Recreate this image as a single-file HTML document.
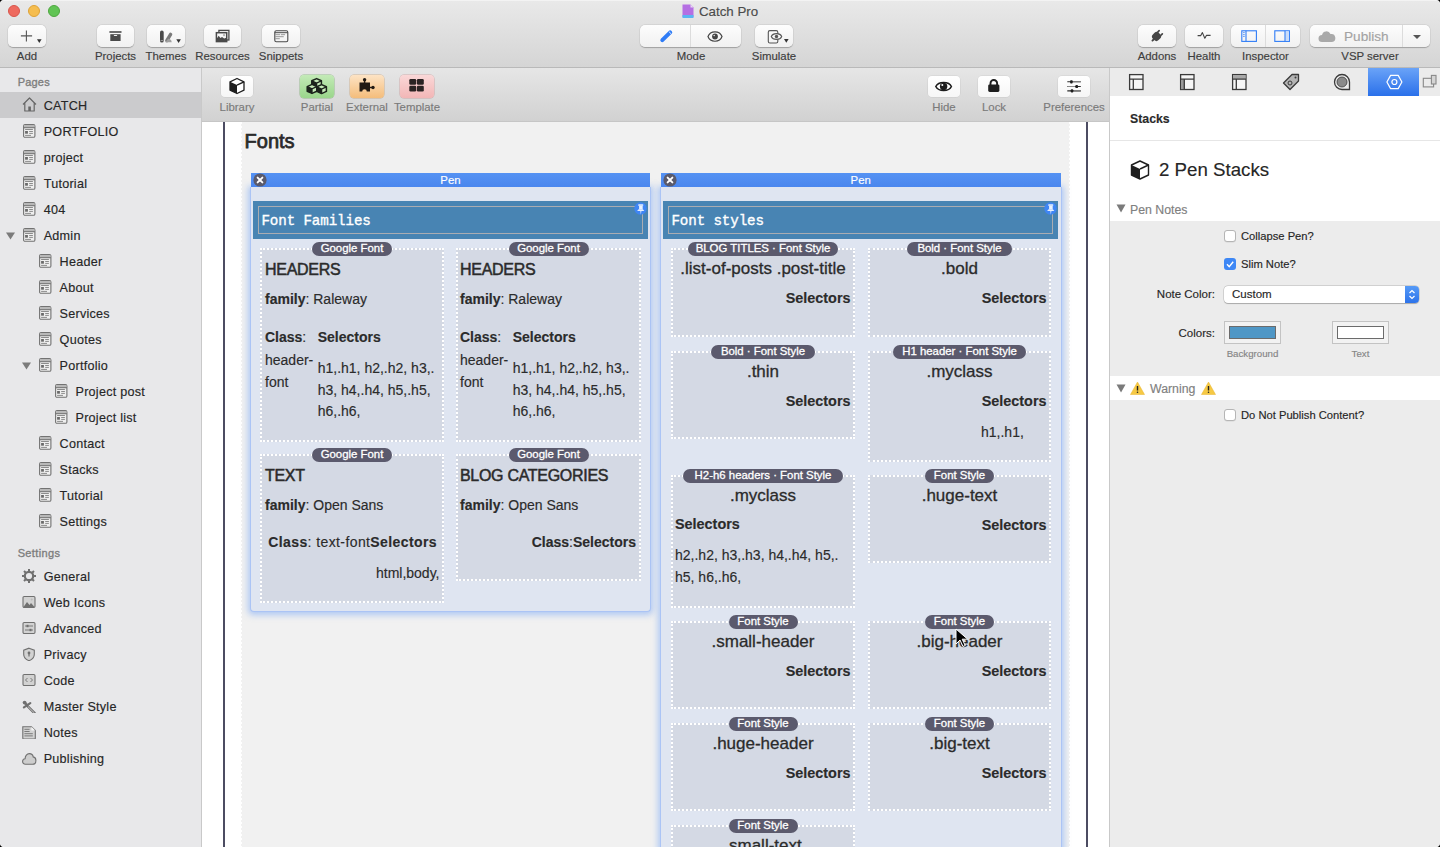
<!DOCTYPE html><html><head><meta charset="utf-8"><style>
html,body{margin:0;padding:0}
body{width:1440px;height:847px;overflow:hidden;position:relative;background:#fff;font-family:'Liberation Sans',sans-serif}
.t{position:absolute;white-space:nowrap;-webkit-text-stroke:0.15px currentColor}
.r{position:absolute;box-sizing:border-box}
</style></head><body>

<div class="r" style="left:0px;top:0px;width:1440px;height:67px;background:linear-gradient(#e9e9e9,#d5d5d5);"></div>
<div class="r" style="left:0px;top:67px;width:1440px;height:1px;background:#b9b9b9;"></div>
<div class="r" style="left:8px;top:5px;width:12px;height:12px;border-radius:50%;background:#ee6a5f;border:0.5px solid #d8554b;"></div>
<div class="r" style="left:28px;top:5px;width:12px;height:12px;border-radius:50%;background:#f5bd4f;border:0.5px solid #dea236;"></div>
<div class="r" style="left:48px;top:5px;width:12px;height:12px;border-radius:50%;background:#61c454;border:0.5px solid #4ea73f;"></div>
<svg class="r" style="left:681px;top:3px;" width="14" height="16" viewBox="0 0 14 16"><path d="M1.5 1.5h8l3 3v9.5h-11z" fill="#b56fe3"/><path d="M9.5 1.5l3 3h-3z" fill="#e8d8f5"/><rect x="1.5" y="12" width="11" height="3" fill="#5bb5f2"/></svg>
<div class="t" style="left:699.00px;top:2.89px;font-size:13.3px;line-height:17px;color:#4b4b4b;font-weight:normal;font-family:'Liberation Sans',sans-serif;">Catch Pro</div>
<div class="r" style="left:8px;top:25px;width:38px;height:22px;border-radius:5px;background:linear-gradient(#fdfdfd,#f1f1f1);box-shadow:0 0.5px 1px rgba(0,0,0,0.25),0 0 0 0.5px rgba(0,0,0,0.06);"></div>
<div class="r" style="left:97px;top:25px;width:37px;height:22px;border-radius:5px;background:linear-gradient(#fdfdfd,#f1f1f1);box-shadow:0 0.5px 1px rgba(0,0,0,0.25),0 0 0 0.5px rgba(0,0,0,0.06);"></div>
<div class="r" style="left:147px;top:25px;width:38px;height:22px;border-radius:5px;background:linear-gradient(#fdfdfd,#f1f1f1);box-shadow:0 0.5px 1px rgba(0,0,0,0.25),0 0 0 0.5px rgba(0,0,0,0.06);"></div>
<div class="r" style="left:204px;top:25px;width:37px;height:22px;border-radius:5px;background:linear-gradient(#fdfdfd,#f1f1f1);box-shadow:0 0.5px 1px rgba(0,0,0,0.25),0 0 0 0.5px rgba(0,0,0,0.06);"></div>
<div class="r" style="left:262px;top:25px;width:38px;height:22px;border-radius:5px;background:linear-gradient(#fdfdfd,#f1f1f1);box-shadow:0 0.5px 1px rgba(0,0,0,0.25),0 0 0 0.5px rgba(0,0,0,0.06);"></div>
<div class="r" style="left:640px;top:25px;width:101px;height:22px;border-radius:5px;background:linear-gradient(#fdfdfd,#f1f1f1);box-shadow:0 0.5px 1px rgba(0,0,0,0.25),0 0 0 0.5px rgba(0,0,0,0.06);"></div>
<div class="r" style="left:755px;top:25px;width:38px;height:22px;border-radius:5px;background:linear-gradient(#fdfdfd,#f1f1f1);box-shadow:0 0.5px 1px rgba(0,0,0,0.25),0 0 0 0.5px rgba(0,0,0,0.06);"></div>
<div class="r" style="left:1138px;top:25px;width:38px;height:22px;border-radius:5px;background:linear-gradient(#fdfdfd,#f1f1f1);box-shadow:0 0.5px 1px rgba(0,0,0,0.25),0 0 0 0.5px rgba(0,0,0,0.06);"></div>
<div class="r" style="left:1185px;top:25px;width:38px;height:22px;border-radius:5px;background:linear-gradient(#fdfdfd,#f1f1f1);box-shadow:0 0.5px 1px rgba(0,0,0,0.25),0 0 0 0.5px rgba(0,0,0,0.06);"></div>
<div class="r" style="left:1231px;top:25px;width:69px;height:22px;border-radius:5px;background:linear-gradient(#fdfdfd,#f1f1f1);box-shadow:0 0.5px 1px rgba(0,0,0,0.25),0 0 0 0.5px rgba(0,0,0,0.06);"></div>
<div class="r" style="left:1310px;top:25px;width:120px;height:22px;border-radius:5px;background:linear-gradient(#fdfdfd,#f1f1f1);box-shadow:0 0.5px 1px rgba(0,0,0,0.25),0 0 0 0.5px rgba(0,0,0,0.06);"></div>
<div class="r" style="left:690px;top:25px;width:1px;height:22px;background:#dcdcdc;"></div>
<div class="r" style="left:1265px;top:25px;width:1px;height:22px;background:#dcdcdc;"></div>
<div class="r" style="left:1402px;top:25px;width:1px;height:22px;background:#dcdcdc;"></div>
<div class="t" style="left:-33.00px;width:120px;text-align:center;top:48.55px;font-size:11.4px;line-height:15px;color:#3d3d3d;font-weight:normal;font-family:'Liberation Sans',sans-serif;">Add</div>
<div class="t" style="left:55.50px;width:120px;text-align:center;top:48.55px;font-size:11.4px;line-height:15px;color:#3d3d3d;font-weight:normal;font-family:'Liberation Sans',sans-serif;">Projects</div>
<div class="t" style="left:106.00px;width:120px;text-align:center;top:48.55px;font-size:11.4px;line-height:15px;color:#3d3d3d;font-weight:normal;font-family:'Liberation Sans',sans-serif;">Themes</div>
<div class="t" style="left:162.50px;width:120px;text-align:center;top:48.55px;font-size:11.4px;line-height:15px;color:#3d3d3d;font-weight:normal;font-family:'Liberation Sans',sans-serif;">Resources</div>
<div class="t" style="left:221.00px;width:120px;text-align:center;top:48.55px;font-size:11.4px;line-height:15px;color:#3d3d3d;font-weight:normal;font-family:'Liberation Sans',sans-serif;">Snippets</div>
<div class="t" style="left:631.00px;width:120px;text-align:center;top:48.55px;font-size:11.4px;line-height:15px;color:#3d3d3d;font-weight:normal;font-family:'Liberation Sans',sans-serif;">Mode</div>
<div class="t" style="left:714.00px;width:120px;text-align:center;top:48.55px;font-size:11.4px;line-height:15px;color:#3d3d3d;font-weight:normal;font-family:'Liberation Sans',sans-serif;">Simulate</div>
<div class="t" style="left:1097.00px;width:120px;text-align:center;top:48.55px;font-size:11.4px;line-height:15px;color:#3d3d3d;font-weight:normal;font-family:'Liberation Sans',sans-serif;">Addons</div>
<div class="t" style="left:1144.00px;width:120px;text-align:center;top:48.55px;font-size:11.4px;line-height:15px;color:#3d3d3d;font-weight:normal;font-family:'Liberation Sans',sans-serif;">Health</div>
<div class="t" style="left:1205.50px;width:120px;text-align:center;top:48.55px;font-size:11.4px;line-height:15px;color:#3d3d3d;font-weight:normal;font-family:'Liberation Sans',sans-serif;">Inspector</div>
<div class="t" style="left:1310.00px;width:120px;text-align:center;top:48.55px;font-size:11.4px;line-height:15px;color:#3d3d3d;font-weight:normal;font-family:'Liberation Sans',sans-serif;">VSP server</div>
<svg class="r" style="left:18px;top:29px;" width="24" height="15" viewBox="0 0 24 15"><path d="M8.4 1.6v10.8M2.9 6.9h11.2" stroke="#555" stroke-width="1.1"/><path d="M19 10.3h4.6l-2.3 3.7z" fill="#333"/></svg>
<svg class="r" style="left:106px;top:30px;" width="20" height="13" viewBox="0 0 20 13"><rect x="3.4" y="1.2" width="12.1" height="1.6" fill="#4a4a4a"/><rect x="4.3" y="4.2" width="10.3" height="6.8" fill="#4a4a4a"/><rect x="7.8" y="5.1" width="3.4" height="1" rx="0.5" fill="#eee"/></svg>
<svg class="r" style="left:156px;top:28px;" width="26" height="17" viewBox="0 0 26 17"><rect x="4" y="2.6" width="3.7" height="11.9" rx="1.85" fill="#4a4a4a"/><rect x="4.6" y="12.2" width="2.5" height="0.7" fill="#bbb"/><path d="M10.8 12.6L14.6 6.4" stroke="#7a7a7a" stroke-width="3.4" stroke-linecap="round"/><path d="M9.3 14.3h6.4c0-2.2-1.6-3.6-3.6-3.6z" fill="#a0a0a0"/><path d="M20.3 11.2h4.6l-2.3 3.8z" fill="#333"/></svg>
<svg class="r" style="left:212px;top:28px;" width="22" height="16" viewBox="0 0 22 16"><rect x="6.9" y="2.4" width="10" height="9.6" fill="none" stroke="#4a4a4a" stroke-width="1.3"/><rect x="4.4" y="4.7" width="10.3" height="8.9" fill="#f7f7f7" stroke="#4a4a4a" stroke-width="1.5"/><path d="M4.6 13.4V10.8L6.7 7.8L8.4 10L10 9L12.2 10.6L14.4 9.8V13.4Z" fill="#4a4a4a"/><circle cx="12" cy="7.2" r="1.1" fill="#b0b0b0"/></svg>
<svg class="r" style="left:270px;top:28px;" width="22" height="16" viewBox="0 0 22 16"><rect x="4.8" y="2.7" width="13" height="11" rx="1.5" fill="none" stroke="#4a4a4a" stroke-width="1.1"/><path d="M4.8 4.7h13" stroke="#4a4a4a" stroke-width="1"/><path d="M5.8 6.7h4M11.4 6.7h3.3M5.8 8.7h7.5M5.8 10.7h3.6" stroke="#777" stroke-width="0.75" stroke-linecap="round"/></svg>
<svg class="r" style="left:658px;top:28px;" width="18" height="16" viewBox="0 0 18 16"><path d="M4.3 12.2L12.2 4.3" stroke="#2f7cf6" stroke-width="4" stroke-linecap="round"/><path d="M2.9 13.6l0.6-3 2.4 2.4z" fill="#2f7cf6"/><path d="M10.9 3.6l2.1 2.1" stroke="#fff" stroke-width="0.8"/></svg>
<svg class="r" style="left:704px;top:28px;" width="22" height="16" viewBox="0 0 22 16"><path d="M4 8.5C6.2 2.2 15.8 2.2 18 8.5C15.8 14.8 6.2 14.8 4 8.5Z" fill="none" stroke="#444" stroke-width="1.2"/><circle cx="11" cy="8.5" r="2.9" fill="#444"/><circle cx="10.2" cy="7.5" r="0.8" fill="#ddd"/></svg>
<svg class="r" style="left:764px;top:28px;" width="28" height="17" viewBox="0 0 28 17"><rect x="4.3" y="2.6" width="9.5" height="12.4" rx="1.6" fill="none" stroke="#555" stroke-width="1.1"/><path d="M7.3 8.5c1.6-3.8 8.8-3.8 10.4 0c-1.6 3.8-8.8 3.8-10.4 0z" fill="#f5f5f5" stroke="#555" stroke-width="1.1"/><circle cx="12.5" cy="8.5" r="1.7" fill="#555"/><path d="M20 11h4.6l-2.3 3.7z" fill="#333"/></svg>
<svg class="r" style="left:1147px;top:27px;" width="20" height="18" viewBox="0 0 20 18"><g transform="rotate(-45 10 9)" fill="#454545"><rect x="5.2" y="5" width="8.3" height="8" rx="3"/><rect x="12.5" y="5.9" width="3.6" height="1.7" rx="0.8"/><rect x="12.5" y="10.4" width="3.6" height="1.7" rx="0.8"/><rect x="2.6" y="8.1" width="3.4" height="1.9" rx="0.9"/></g></svg>
<svg class="r" style="left:1194px;top:28px;" width="20" height="16" viewBox="0 0 20 16"><path d="M3.6 7.6h3.2l1.6-3 2.4 5.6 1.6-2.8h4.2" fill="none" stroke="#444" stroke-width="1.1" stroke-linejoin="round"/></svg>
<svg class="r" style="left:1240px;top:28px;" width="18" height="16" viewBox="0 0 18 16"><rect x="1.8" y="2.8" width="14.6" height="10.6" fill="none" stroke="#2f7cf6" stroke-width="1.1"/><path d="M6 2.8v10.6" stroke="#2f7cf6" stroke-width="1.1"/><path d="M3.1 4.6h1.6M3.1 6.6h1.6M3.1 8.4h1.6" stroke="#2f7cf6" stroke-width="0.8"/></svg>
<svg class="r" style="left:1274px;top:28px;" width="18" height="16" viewBox="0 0 18 16"><rect x="0.8" y="2.8" width="14.6" height="10.6" fill="none" stroke="#2f7cf6" stroke-width="1.1"/><rect x="11.3" y="3.3" width="3.6" height="9.6" fill="#c9dcfa"/><path d="M11 2.8v10.6" stroke="#2f7cf6" stroke-width="1.1"/></svg>
<svg class="r" style="left:1318px;top:29px;" width="18" height="15" viewBox="0 0 18 15"><path d="M4 13a3.5 3.5 0 0 1 0-7a4.5 4.5 0 0 1 8.5-1a3.5 3.5 0 0 1 1.5 8z" fill="#a9a9a9"/></svg>
<div class="t" style="left:1344.00px;top:28.29px;font-size:13.6px;line-height:18px;color:#a3a3a3;font-weight:normal;font-family:'Liberation Sans',sans-serif;">Publish</div>
<svg class="r" style="left:1408px;top:30px;" width="18" height="12" viewBox="0 0 18 12"><path d="M5 5h8l-4 4z" fill="#555"/></svg>
<div class="r" style="left:0px;top:68px;width:201px;height:779px;background:#e8e8ea;"></div>
<div class="r" style="left:201px;top:68px;width:1px;height:779px;background:#c9c9c9;"></div>
<div class="t" style="left:17.70px;top:74.79px;font-size:11px;line-height:14px;color:#7e7e7e;font-weight:normal;font-family:'Liberation Sans',sans-serif;letter-spacing:0.2px;-webkit-text-stroke:0.35px #7e7e7e;">Pages</div>
<div class="r" style="left:0px;top:92px;width:201px;height:26px;background:#cbcbcd;"></div>
<svg class="r" style="left:21px;top:96px;" width="17" height="17" viewBox="0 0 17 17"><path d="M2 8.5L8.5 2l6.5 6.5M3.8 7v8h9.4V7" fill="none" stroke="#666" stroke-width="1.2" stroke-linejoin="round"/><rect x="7.3" y="10.5" width="2.6" height="4.5" fill="#666"/></svg>
<div class="t" style="left:43.70px;top:98.13px;font-size:12.6px;line-height:16px;color:#262626;font-weight:normal;font-family:'Liberation Sans',sans-serif;letter-spacing:0.25px;">CATCH</div>
<svg class="r" style="left:23px;top:122.0px;" width="13" height="16.0" viewBox="0 0 13 16.0"><rect x="0.6" y="2.5" width="11.3" height="12.8" rx="1.4" fill="#efefef" stroke="#727272" stroke-width="1.1"/><rect x="1.1" y="3" width="10.3" height="2.6" fill="#b8b8b8"/><path d="M0.6 5.7h11.3" stroke="#727272" stroke-width="1.1"/><path d="M2.1 7.5h7.8M6.2 9.5h3.7M6.2 11.4h3.7M2.1 13.4h5.9" stroke="#7a7a7a" stroke-width="0.85"/><rect x="2.1" y="9" width="2.8" height="2.7" fill="#6a6a6a"/></svg>
<div class="t" style="left:43.70px;top:124.13px;font-size:12.6px;line-height:16px;color:#262626;font-weight:normal;font-family:'Liberation Sans',sans-serif;letter-spacing:0.25px;">PORTFOLIO</div>
<svg class="r" style="left:23px;top:148.0px;" width="13" height="16.0" viewBox="0 0 13 16.0"><rect x="0.6" y="2.5" width="11.3" height="12.8" rx="1.4" fill="#efefef" stroke="#727272" stroke-width="1.1"/><rect x="1.1" y="3" width="10.3" height="2.6" fill="#b8b8b8"/><path d="M0.6 5.7h11.3" stroke="#727272" stroke-width="1.1"/><path d="M2.1 7.5h7.8M6.2 9.5h3.7M6.2 11.4h3.7M2.1 13.4h5.9" stroke="#7a7a7a" stroke-width="0.85"/><rect x="2.1" y="9" width="2.8" height="2.7" fill="#6a6a6a"/></svg>
<div class="t" style="left:43.70px;top:150.13px;font-size:12.6px;line-height:16px;color:#262626;font-weight:normal;font-family:'Liberation Sans',sans-serif;letter-spacing:0.25px;">project</div>
<svg class="r" style="left:23px;top:174.0px;" width="13" height="16.0" viewBox="0 0 13 16.0"><rect x="0.6" y="2.5" width="11.3" height="12.8" rx="1.4" fill="#efefef" stroke="#727272" stroke-width="1.1"/><rect x="1.1" y="3" width="10.3" height="2.6" fill="#b8b8b8"/><path d="M0.6 5.7h11.3" stroke="#727272" stroke-width="1.1"/><path d="M2.1 7.5h7.8M6.2 9.5h3.7M6.2 11.4h3.7M2.1 13.4h5.9" stroke="#7a7a7a" stroke-width="0.85"/><rect x="2.1" y="9" width="2.8" height="2.7" fill="#6a6a6a"/></svg>
<div class="t" style="left:43.70px;top:176.13px;font-size:12.6px;line-height:16px;color:#262626;font-weight:normal;font-family:'Liberation Sans',sans-serif;letter-spacing:0.25px;">Tutorial</div>
<svg class="r" style="left:23px;top:200.0px;" width="13" height="16.0" viewBox="0 0 13 16.0"><rect x="0.6" y="2.5" width="11.3" height="12.8" rx="1.4" fill="#efefef" stroke="#727272" stroke-width="1.1"/><rect x="1.1" y="3" width="10.3" height="2.6" fill="#b8b8b8"/><path d="M0.6 5.7h11.3" stroke="#727272" stroke-width="1.1"/><path d="M2.1 7.5h7.8M6.2 9.5h3.7M6.2 11.4h3.7M2.1 13.4h5.9" stroke="#7a7a7a" stroke-width="0.85"/><rect x="2.1" y="9" width="2.8" height="2.7" fill="#6a6a6a"/></svg>
<div class="t" style="left:43.70px;top:202.13px;font-size:12.6px;line-height:16px;color:#262626;font-weight:normal;font-family:'Liberation Sans',sans-serif;letter-spacing:0.25px;">404</div>
<svg class="r" style="left:23px;top:226.0px;" width="13" height="16.0" viewBox="0 0 13 16.0"><rect x="0.6" y="2.5" width="11.3" height="12.8" rx="1.4" fill="#efefef" stroke="#727272" stroke-width="1.1"/><rect x="1.1" y="3" width="10.3" height="2.6" fill="#b8b8b8"/><path d="M0.6 5.7h11.3" stroke="#727272" stroke-width="1.1"/><path d="M2.1 7.5h7.8M6.2 9.5h3.7M6.2 11.4h3.7M2.1 13.4h5.9" stroke="#7a7a7a" stroke-width="0.85"/><rect x="2.1" y="9" width="2.8" height="2.7" fill="#6a6a6a"/></svg>
<svg class="r" style="left:6px;top:231.5px;" width="9" height="8.0" viewBox="0 0 9 8.0"><path d="M0 0.5h9l-4.5 7z" fill="#7b7b7b"/></svg>
<div class="t" style="left:43.70px;top:228.13px;font-size:12.6px;line-height:16px;color:#262626;font-weight:normal;font-family:'Liberation Sans',sans-serif;letter-spacing:0.25px;">Admin</div>
<svg class="r" style="left:39px;top:252.0px;" width="13" height="16.0" viewBox="0 0 13 16.0"><rect x="0.6" y="2.5" width="11.3" height="12.8" rx="1.4" fill="#efefef" stroke="#727272" stroke-width="1.1"/><rect x="1.1" y="3" width="10.3" height="2.6" fill="#b8b8b8"/><path d="M0.6 5.7h11.3" stroke="#727272" stroke-width="1.1"/><path d="M2.1 7.5h7.8M6.2 9.5h3.7M6.2 11.4h3.7M2.1 13.4h5.9" stroke="#7a7a7a" stroke-width="0.85"/><rect x="2.1" y="9" width="2.8" height="2.7" fill="#6a6a6a"/></svg>
<div class="t" style="left:59.60px;top:254.13px;font-size:12.6px;line-height:16px;color:#262626;font-weight:normal;font-family:'Liberation Sans',sans-serif;letter-spacing:0.25px;">Header</div>
<svg class="r" style="left:39px;top:278.0px;" width="13" height="16.0" viewBox="0 0 13 16.0"><rect x="0.6" y="2.5" width="11.3" height="12.8" rx="1.4" fill="#efefef" stroke="#727272" stroke-width="1.1"/><rect x="1.1" y="3" width="10.3" height="2.6" fill="#b8b8b8"/><path d="M0.6 5.7h11.3" stroke="#727272" stroke-width="1.1"/><path d="M2.1 7.5h7.8M6.2 9.5h3.7M6.2 11.4h3.7M2.1 13.4h5.9" stroke="#7a7a7a" stroke-width="0.85"/><rect x="2.1" y="9" width="2.8" height="2.7" fill="#6a6a6a"/></svg>
<div class="t" style="left:59.60px;top:280.13px;font-size:12.6px;line-height:16px;color:#262626;font-weight:normal;font-family:'Liberation Sans',sans-serif;letter-spacing:0.25px;">About</div>
<svg class="r" style="left:39px;top:304.0px;" width="13" height="16.0" viewBox="0 0 13 16.0"><rect x="0.6" y="2.5" width="11.3" height="12.8" rx="1.4" fill="#efefef" stroke="#727272" stroke-width="1.1"/><rect x="1.1" y="3" width="10.3" height="2.6" fill="#b8b8b8"/><path d="M0.6 5.7h11.3" stroke="#727272" stroke-width="1.1"/><path d="M2.1 7.5h7.8M6.2 9.5h3.7M6.2 11.4h3.7M2.1 13.4h5.9" stroke="#7a7a7a" stroke-width="0.85"/><rect x="2.1" y="9" width="2.8" height="2.7" fill="#6a6a6a"/></svg>
<div class="t" style="left:59.60px;top:306.13px;font-size:12.6px;line-height:16px;color:#262626;font-weight:normal;font-family:'Liberation Sans',sans-serif;letter-spacing:0.25px;">Services</div>
<svg class="r" style="left:39px;top:330.0px;" width="13" height="16.0" viewBox="0 0 13 16.0"><rect x="0.6" y="2.5" width="11.3" height="12.8" rx="1.4" fill="#efefef" stroke="#727272" stroke-width="1.1"/><rect x="1.1" y="3" width="10.3" height="2.6" fill="#b8b8b8"/><path d="M0.6 5.7h11.3" stroke="#727272" stroke-width="1.1"/><path d="M2.1 7.5h7.8M6.2 9.5h3.7M6.2 11.4h3.7M2.1 13.4h5.9" stroke="#7a7a7a" stroke-width="0.85"/><rect x="2.1" y="9" width="2.8" height="2.7" fill="#6a6a6a"/></svg>
<div class="t" style="left:59.60px;top:332.13px;font-size:12.6px;line-height:16px;color:#262626;font-weight:normal;font-family:'Liberation Sans',sans-serif;letter-spacing:0.25px;">Quotes</div>
<svg class="r" style="left:39px;top:356.0px;" width="13" height="16.0" viewBox="0 0 13 16.0"><rect x="0.6" y="2.5" width="11.3" height="12.8" rx="1.4" fill="#efefef" stroke="#727272" stroke-width="1.1"/><rect x="1.1" y="3" width="10.3" height="2.6" fill="#b8b8b8"/><path d="M0.6 5.7h11.3" stroke="#727272" stroke-width="1.1"/><path d="M2.1 7.5h7.8M6.2 9.5h3.7M6.2 11.4h3.7M2.1 13.4h5.9" stroke="#7a7a7a" stroke-width="0.85"/><rect x="2.1" y="9" width="2.8" height="2.7" fill="#6a6a6a"/></svg>
<svg class="r" style="left:22px;top:361.5px;" width="9" height="8.0" viewBox="0 0 9 8.0"><path d="M0 0.5h9l-4.5 7z" fill="#7b7b7b"/></svg>
<div class="t" style="left:59.60px;top:358.13px;font-size:12.6px;line-height:16px;color:#262626;font-weight:normal;font-family:'Liberation Sans',sans-serif;letter-spacing:0.25px;">Portfolio</div>
<svg class="r" style="left:55px;top:382.0px;" width="13" height="16.0" viewBox="0 0 13 16.0"><rect x="0.6" y="2.5" width="11.3" height="12.8" rx="1.4" fill="#efefef" stroke="#727272" stroke-width="1.1"/><rect x="1.1" y="3" width="10.3" height="2.6" fill="#b8b8b8"/><path d="M0.6 5.7h11.3" stroke="#727272" stroke-width="1.1"/><path d="M2.1 7.5h7.8M6.2 9.5h3.7M6.2 11.4h3.7M2.1 13.4h5.9" stroke="#7a7a7a" stroke-width="0.85"/><rect x="2.1" y="9" width="2.8" height="2.7" fill="#6a6a6a"/></svg>
<div class="t" style="left:75.50px;top:384.13px;font-size:12.6px;line-height:16px;color:#262626;font-weight:normal;font-family:'Liberation Sans',sans-serif;letter-spacing:0.25px;">Project post</div>
<svg class="r" style="left:55px;top:408.0px;" width="13" height="16.0" viewBox="0 0 13 16.0"><rect x="0.6" y="2.5" width="11.3" height="12.8" rx="1.4" fill="#efefef" stroke="#727272" stroke-width="1.1"/><rect x="1.1" y="3" width="10.3" height="2.6" fill="#b8b8b8"/><path d="M0.6 5.7h11.3" stroke="#727272" stroke-width="1.1"/><path d="M2.1 7.5h7.8M6.2 9.5h3.7M6.2 11.4h3.7M2.1 13.4h5.9" stroke="#7a7a7a" stroke-width="0.85"/><rect x="2.1" y="9" width="2.8" height="2.7" fill="#6a6a6a"/></svg>
<div class="t" style="left:75.50px;top:410.13px;font-size:12.6px;line-height:16px;color:#262626;font-weight:normal;font-family:'Liberation Sans',sans-serif;letter-spacing:0.25px;">Project list</div>
<svg class="r" style="left:39px;top:434.0px;" width="13" height="16.0" viewBox="0 0 13 16.0"><rect x="0.6" y="2.5" width="11.3" height="12.8" rx="1.4" fill="#efefef" stroke="#727272" stroke-width="1.1"/><rect x="1.1" y="3" width="10.3" height="2.6" fill="#b8b8b8"/><path d="M0.6 5.7h11.3" stroke="#727272" stroke-width="1.1"/><path d="M2.1 7.5h7.8M6.2 9.5h3.7M6.2 11.4h3.7M2.1 13.4h5.9" stroke="#7a7a7a" stroke-width="0.85"/><rect x="2.1" y="9" width="2.8" height="2.7" fill="#6a6a6a"/></svg>
<div class="t" style="left:59.60px;top:436.13px;font-size:12.6px;line-height:16px;color:#262626;font-weight:normal;font-family:'Liberation Sans',sans-serif;letter-spacing:0.25px;">Contact</div>
<svg class="r" style="left:39px;top:460.0px;" width="13" height="16.0" viewBox="0 0 13 16.0"><rect x="0.6" y="2.5" width="11.3" height="12.8" rx="1.4" fill="#efefef" stroke="#727272" stroke-width="1.1"/><rect x="1.1" y="3" width="10.3" height="2.6" fill="#b8b8b8"/><path d="M0.6 5.7h11.3" stroke="#727272" stroke-width="1.1"/><path d="M2.1 7.5h7.8M6.2 9.5h3.7M6.2 11.4h3.7M2.1 13.4h5.9" stroke="#7a7a7a" stroke-width="0.85"/><rect x="2.1" y="9" width="2.8" height="2.7" fill="#6a6a6a"/></svg>
<div class="t" style="left:59.60px;top:462.13px;font-size:12.6px;line-height:16px;color:#262626;font-weight:normal;font-family:'Liberation Sans',sans-serif;letter-spacing:0.25px;">Stacks</div>
<svg class="r" style="left:39px;top:486.0px;" width="13" height="16.0" viewBox="0 0 13 16.0"><rect x="0.6" y="2.5" width="11.3" height="12.8" rx="1.4" fill="#efefef" stroke="#727272" stroke-width="1.1"/><rect x="1.1" y="3" width="10.3" height="2.6" fill="#b8b8b8"/><path d="M0.6 5.7h11.3" stroke="#727272" stroke-width="1.1"/><path d="M2.1 7.5h7.8M6.2 9.5h3.7M6.2 11.4h3.7M2.1 13.4h5.9" stroke="#7a7a7a" stroke-width="0.85"/><rect x="2.1" y="9" width="2.8" height="2.7" fill="#6a6a6a"/></svg>
<div class="t" style="left:59.60px;top:488.13px;font-size:12.6px;line-height:16px;color:#262626;font-weight:normal;font-family:'Liberation Sans',sans-serif;letter-spacing:0.25px;">Tutorial</div>
<svg class="r" style="left:39px;top:512.0px;" width="13" height="16.0" viewBox="0 0 13 16.0"><rect x="0.6" y="2.5" width="11.3" height="12.8" rx="1.4" fill="#efefef" stroke="#727272" stroke-width="1.1"/><rect x="1.1" y="3" width="10.3" height="2.6" fill="#b8b8b8"/><path d="M0.6 5.7h11.3" stroke="#727272" stroke-width="1.1"/><path d="M2.1 7.5h7.8M6.2 9.5h3.7M6.2 11.4h3.7M2.1 13.4h5.9" stroke="#7a7a7a" stroke-width="0.85"/><rect x="2.1" y="9" width="2.8" height="2.7" fill="#6a6a6a"/></svg>
<div class="t" style="left:59.60px;top:514.13px;font-size:12.6px;line-height:16px;color:#262626;font-weight:normal;font-family:'Liberation Sans',sans-serif;letter-spacing:0.25px;">Settings</div>
<div class="t" style="left:17.70px;top:545.99px;font-size:11px;line-height:14px;color:#7e7e7e;font-weight:normal;font-family:'Liberation Sans',sans-serif;letter-spacing:0.35px;-webkit-text-stroke:0.35px #7e7e7e;">Settings</div>
<svg class="r" style="left:22px;top:568.9px;" width="15" height="14.0" viewBox="0 0 15 14.0"><g transform="translate(7,7)"><circle r="4.2" fill="none" stroke="#707070" stroke-width="2.2"/><g stroke="#707070" stroke-width="2"><path d="M0-7v2.5M0 4.5V7M-7 0h2.5M4.5 0H7M-5 -5l1.8 1.8M3.2 3.2L5 5M-5 5l1.8-1.8M3.2-3.2L5-5"/></g></g></svg>
<div class="t" style="left:43.70px;top:568.53px;font-size:12.6px;line-height:16px;color:#262626;font-weight:normal;font-family:'Liberation Sans',sans-serif;letter-spacing:0.25px;">General</div>
<svg class="r" style="left:22px;top:594.9px;" width="15" height="14.0" viewBox="0 0 15 14.0"><rect x="1" y="1.5" width="12" height="11" rx="1.2" fill="#d2d2d2" stroke="#707070" stroke-width="1.1"/><path d="M1.5 12l3.5-5 2.5 3 1.5-2 3.5 4z" fill="#707070"/><circle cx="9.7" cy="4.5" r="1" fill="#bbb"/></svg>
<div class="t" style="left:43.70px;top:594.53px;font-size:12.6px;line-height:16px;color:#262626;font-weight:normal;font-family:'Liberation Sans',sans-serif;letter-spacing:0.25px;">Web Icons</div>
<svg class="r" style="left:22px;top:620.9px;" width="15" height="14.0" viewBox="0 0 15 14.0"><rect x="1" y="1.5" width="12" height="11" rx="1.2" fill="#d2d2d2" stroke="#707070" stroke-width="1.1"/><path d="M3 5h8M3 9h8" stroke="#707070" stroke-width="0.9"/><rect x="4.5" y="3.8" width="2" height="2.4" fill="#707070"/><rect x="7.5" y="7.8" width="2" height="2.4" fill="#707070"/></svg>
<div class="t" style="left:43.70px;top:620.53px;font-size:12.6px;line-height:16px;color:#262626;font-weight:normal;font-family:'Liberation Sans',sans-serif;letter-spacing:0.25px;">Advanced</div>
<svg class="r" style="left:22px;top:646.9px;" width="15" height="14.0" viewBox="0 0 15 14.0"><path d="M7 1.2l5.3 2v4c0 3.2-2.5 5.5-5.3 6.5c-2.8-1-5.3-3.3-5.3-6.5v-4z" fill="#d2d2d2" stroke="#707070" stroke-width="1.1"/><circle cx="7" cy="6" r="1.4" fill="#707070"/><rect x="6.4" y="6.5" width="1.2" height="3" fill="#707070"/></svg>
<div class="t" style="left:43.70px;top:646.53px;font-size:12.6px;line-height:16px;color:#262626;font-weight:normal;font-family:'Liberation Sans',sans-serif;letter-spacing:0.25px;">Privacy</div>
<svg class="r" style="left:22px;top:672.9px;" width="15" height="14.0" viewBox="0 0 15 14.0"><rect x="1" y="1.5" width="12" height="11" rx="1.2" fill="#d2d2d2" stroke="#707070" stroke-width="1.1"/><path d="M5.5 5L3.5 7l2 2M8.5 5l2 2-2 2" fill="none" stroke="#707070" stroke-width="0.9"/></svg>
<div class="t" style="left:43.70px;top:672.53px;font-size:12.6px;line-height:16px;color:#262626;font-weight:normal;font-family:'Liberation Sans',sans-serif;letter-spacing:0.25px;">Code</div>
<svg class="r" style="left:22px;top:698.9px;" width="15" height="14.0" viewBox="0 0 15 14.0"><path d="M5.6 7.2L12.6 14.2" stroke="#707070" stroke-width="2.6" stroke-linecap="round"/><path d="M5.9 7.5L12.3 13.9" stroke="#c8c8c8" stroke-width="1"/><circle cx="2.6" cy="3.6" r="1.9" fill="#707070"/><path d="M2.6 3.6L5.5 6.5" stroke="#707070" stroke-width="2.4"/><path d="M1.9 8.4L8.3 4.2" stroke="#707070" stroke-width="2.2" stroke-linecap="round"/></svg>
<div class="t" style="left:43.70px;top:698.53px;font-size:12.6px;line-height:16px;color:#262626;font-weight:normal;font-family:'Liberation Sans',sans-serif;letter-spacing:0.25px;">Master Style</div>
<svg class="r" style="left:22px;top:724.9px;" width="15" height="14.0" viewBox="0 0 15 14.0"><path d="M0.8 1.7h8.6l3.9 3.9v7.7a0.7 0.7 0 0 1-0.7 0.7H1.5a0.7 0.7 0 0 1-0.7-0.7z" fill="#d2d2d2" stroke="#707070" stroke-width="1.1"/><path d="M9.4 1.7v3.9h3.9z" fill="#f4f4f4"/><path d="M2.4 4.3h5.2M2.4 6.5h5.2M2.4 8.7h8.4M2.4 10.9h8.4" stroke="#707070" stroke-width="0.9"/></svg>
<div class="t" style="left:43.70px;top:724.53px;font-size:12.6px;line-height:16px;color:#262626;font-weight:normal;font-family:'Liberation Sans',sans-serif;letter-spacing:0.25px;">Notes</div>
<svg class="r" style="left:22px;top:750.9px;" width="15" height="14.0" viewBox="0 0 15 14.0"><path d="M3.5 13.3C1.6 13.3 0.6 11.9 0.6 10.5C0.6 9 1.7 7.9 3.1 7.8C3.1 5 5 2.6 7.4 2.6C9.4 2.6 10.9 4 11.2 5.9C13 6.2 13.9 7.6 13.9 9.5C13.9 11.6 12.6 13.3 10.6 13.3Z" fill="#cdcdcd" stroke="#707070" stroke-width="1.1"/></svg>
<div class="t" style="left:43.70px;top:750.53px;font-size:12.6px;line-height:16px;color:#262626;font-weight:normal;font-family:'Liberation Sans',sans-serif;letter-spacing:0.25px;">Publishing</div>
<div class="r" style="left:202px;top:68px;width:907px;height:54px;background:linear-gradient(#e6e6e6,#d1d1d1);"></div>
<div class="r" style="left:202px;top:121px;width:907px;height:1px;background:#c6c6c6;"></div>
<div class="r" style="left:221px;top:76px;width:32px;height:21px;border-radius:4px;background:linear-gradient(#ffffff,#f6f6f6);box-shadow:0 0 0 0.5px rgba(0,0,0,0.08);"></div>
<div class="r" style="left:300px;top:75px;width:34px;height:23px;border-radius:4px;background:linear-gradient(#c3eab7,#9ad68b);box-shadow:0 0 0 0.5px rgba(60,140,40,0.45);"></div>
<div class="r" style="left:350px;top:75px;width:34px;height:23px;border-radius:4px;background:linear-gradient(#fde3c4,#f4bd7b);box-shadow:0 0 0 0.5px rgba(180,110,30,0.4);"></div>
<div class="r" style="left:400px;top:75px;width:34px;height:23px;border-radius:4px;background:linear-gradient(#fad8d8,#f2b6b6);box-shadow:0 0 0 0.5px rgba(180,80,80,0.38);"></div>
<div class="r" style="left:928px;top:76px;width:32px;height:21px;border-radius:4px;background:linear-gradient(#ffffff,#f6f6f6);box-shadow:0 0 0 0.5px rgba(0,0,0,0.08);"></div>
<div class="r" style="left:978px;top:76px;width:32px;height:21px;border-radius:4px;background:linear-gradient(#ffffff,#f6f6f6);box-shadow:0 0 0 0.5px rgba(0,0,0,0.08);"></div>
<div class="r" style="left:1058px;top:76px;width:32px;height:21px;border-radius:4px;background:linear-gradient(#ffffff,#f6f6f6);box-shadow:0 0 0 0.5px rgba(0,0,0,0.08);"></div>
<div class="t" style="left:177.00px;width:120px;text-align:center;top:99.55px;font-size:11.4px;line-height:15px;color:#7a7a7a;font-weight:normal;font-family:'Liberation Sans',sans-serif;">Library</div>
<div class="t" style="left:257.00px;width:120px;text-align:center;top:99.55px;font-size:11.4px;line-height:15px;color:#7a7a7a;font-weight:normal;font-family:'Liberation Sans',sans-serif;">Partial</div>
<div class="t" style="left:307.00px;width:120px;text-align:center;top:99.55px;font-size:11.4px;line-height:15px;color:#7a7a7a;font-weight:normal;font-family:'Liberation Sans',sans-serif;">External</div>
<div class="t" style="left:357.00px;width:120px;text-align:center;top:99.55px;font-size:11.4px;line-height:15px;color:#7a7a7a;font-weight:normal;font-family:'Liberation Sans',sans-serif;">Template</div>
<div class="t" style="left:884.00px;width:120px;text-align:center;top:99.55px;font-size:11.4px;line-height:15px;color:#7a7a7a;font-weight:normal;font-family:'Liberation Sans',sans-serif;">Hide</div>
<div class="t" style="left:934.00px;width:120px;text-align:center;top:99.55px;font-size:11.4px;line-height:15px;color:#7a7a7a;font-weight:normal;font-family:'Liberation Sans',sans-serif;">Lock</div>
<div class="t" style="left:1014.00px;width:120px;text-align:center;top:99.55px;font-size:11.4px;line-height:15px;color:#7a7a7a;font-weight:normal;font-family:'Liberation Sans',sans-serif;">Preferences</div>
<svg class="r" style="left:228px;top:77px;" width="18" height="18" viewBox="0 0 18 18"><path d="M9 1.5l7 3.3v8.4L9 16.5 2 13.2V4.8z" fill="#fff" stroke="#1e1e1e" stroke-width="1.3" stroke-linejoin="round"/><path d="M2 4.8L9 8.1v8.4L2 13.2z" fill="#1e1e1e"/><path d="M9 8.1l7-3.3" stroke="#1e1e1e" stroke-width="1.3"/></svg>
<svg class="r" style="left:305px;top:76px;" width="25" height="20" viewBox="0 0 25 20"><g transform="translate(6.6,2.2)"><path d="M5 0.4L9.8 2.6V7.2L5 9.4 0.2 7.2V2.6z" fill="#c6ebb8" stroke="#1c241c" stroke-width="1.5" stroke-linejoin="round"/><path d="M0.2 2.6L5 4.8V9.4L0.2 7.2z" fill="#1c241c"/><path d="M0.2 2.6L5 4.8 9.8 2.6M5 4.8V9.4" fill="none" stroke="#1c241c" stroke-width="1.3"/></g><g transform="translate(2,8)"><path d="M5 0.4L9.8 2.6V7.2L5 9.4 0.2 7.2V2.6z" fill="#c6ebb8" stroke="#1c241c" stroke-width="1.5" stroke-linejoin="round"/><path d="M0.2 2.6L5 4.8V9.4L0.2 7.2z" fill="#1c241c"/><path d="M0.2 2.6L5 4.8 9.8 2.6M5 4.8V9.4" fill="none" stroke="#1c241c" stroke-width="1.3"/></g><g transform="translate(11.6,8.2)"><path d="M5 0.4L9.8 2.6V7.2L5 9.4 0.2 7.2V2.6z" fill="#c6ebb8" stroke="#1c241c" stroke-width="1.5" stroke-linejoin="round"/><path d="M0.2 2.6L5 4.8V9.4L0.2 7.2z" fill="#1c241c"/><path d="M0.2 2.6L5 4.8 9.8 2.6M5 4.8V9.4" fill="none" stroke="#1c241c" stroke-width="1.3"/></g></svg>
<svg class="r" style="left:355px;top:76px;" width="23" height="20" viewBox="0 0 23 20"><path d="M4.5 6.6H15V15.6H11.8A2.3 2.3 0 0 0 7.2 15.6H4.5Z" fill="#211a14"/><circle cx="9.6" cy="3.7" r="1.7" fill="#211a14"/><rect x="8.9" y="4" width="1.4" height="3" fill="#211a14"/><circle cx="18" cy="11.5" r="1.7" fill="#211a14"/><rect x="14.5" y="10.8" width="3" height="1.4" fill="#211a14"/></svg>
<svg class="r" style="left:405px;top:76px;" width="25" height="20" viewBox="0 0 25 20"><rect x="4.3" y="3" width="6.9" height="5.8" rx="1.3" fill="#2a2222"/><rect x="11.9" y="3" width="6.9" height="5.8" rx="1.3" fill="#2a2222"/><rect x="4.3" y="9.8" width="6.9" height="5.8" rx="1.3" fill="#2a2222"/><rect x="11.9" y="9.8" width="6.9" height="5.8" rx="1.3" fill="#2a2222"/></svg>
<svg class="r" style="left:932px;top:78px;" width="24" height="18" viewBox="0 0 24 18"><path d="M3.8 8.5C6.5 3.2 16.9 3.2 19.4 8.5C16.9 13.8 6.5 13.8 3.8 8.5Z" fill="#fff" stroke="#1e1e1e" stroke-width="1.6"/><circle cx="11.6" cy="8.5" r="3.7" fill="#1e1e1e"/><circle cx="10.3" cy="7.1" r="1" fill="#fff"/></svg>
<svg class="r" style="left:985px;top:77px;" width="19" height="19" viewBox="0 0 19 19"><path d="M5.5 8V6.3a3.3 3.3 0 0 1 6.6 0V8" fill="none" stroke="#1e1e1e" stroke-width="1.9"/><rect x="3.2" y="7.4" width="11.2" height="7.5" rx="1.4" fill="#1e1e1e"/></svg>
<svg class="r" style="left:1064px;top:78px;" width="22" height="18" viewBox="0 0 22 18"><path d="M3.3 3.8h13.5M3.3 8.5h13.5M3.3 12.9h13.5" stroke="#2a2a2a" stroke-width="1.1"/><path d="M9 3.8h7.8M3.3 8.5h7.8M9.5 12.9h7.3" stroke="#8a8a8a" stroke-width="1.1"/><rect x="6.1" y="2.2" width="2.6" height="3.2" rx="0.9" fill="#1e1e1e"/><rect x="11.4" y="6.9" width="2.6" height="3.2" rx="0.9" fill="#1e1e1e"/><rect x="6.7" y="11.3" width="2.6" height="3.2" rx="0.9" fill="#1e1e1e"/></svg>
<div class="r" style="left:202px;top:122px;width:907px;height:725px;background:#ffffff;"></div>
<div class="r" style="left:223px;top:122px;width:2px;height:725px;background:#4c4c62;"></div>
<div class="r" style="left:1086px;top:122px;width:2px;height:725px;background:#4c4c62;"></div>
<div class="r" style="left:241px;top:122px;width:829px;height:725px;background:#f1f1f1;"></div>
<div class="r" style="left:240px;top:122px;width:2px;height:725px;background:repeating-linear-gradient(#ffffff 0 2px,transparent 2px 4px);"></div>
<div class="r" style="left:1069px;top:122px;width:2px;height:725px;background:repeating-linear-gradient(#ffffff 0 2px,transparent 2px 4px);"></div>
<div class="t" style="left:244.60px;top:128.07px;font-size:20px;line-height:26px;color:#2a2a2a;font-weight:normal;font-family:'Liberation Sans',sans-serif;-webkit-text-stroke:0.75px #2a2a2a;">Fonts</div>
<div class="r" style="left:250px;top:187px;width:401px;height:425px;background:#dfe5f1;border:1px solid #abc4f5;border-top:none;box-shadow:0 1px 6px 1.5px rgba(110,160,245,0.5);border-radius:0 0 4px 4px;"></div>
<div class="r" style="left:251px;top:173px;width:399px;height:14px;background:linear-gradient(#5592f3,#4a86ee);"></div>
<div class="t" style="left:420.50px;width:60px;text-align:center;top:172.55px;font-size:11.4px;line-height:15px;color:#ffffff;font-weight:normal;font-family:'Liberation Sans',sans-serif;">Pen</div>
<svg class="r" style="left:253px;top:173px;" width="14" height="14" viewBox="0 0 14 14"><circle cx="7" cy="7" r="6.6" fill="#5a5a6c"/><path d="M4.6 4.6l4.8 4.8M9.4 4.6l-4.8 4.8" stroke="#fff" stroke-width="1.9" stroke-linecap="round"/></svg>
<div class="r" style="left:253px;top:201px;width:394.5px;height:38px;background:#4884b3;"></div>
<div class="r" style="left:258px;top:206px;width:384.5px;height:28px;border:1px solid #a9acb2;"></div>
<div class="t" style="left:261.40px;top:211.68px;font-size:14.2px;line-height:18px;color:#ffffff;font-weight:normal;font-family:'Liberation Mono',monospace;-webkit-text-stroke:0.35px #fff;letter-spacing:-0.1px;">Font Families</div>
<svg class="r" style="left:633.5px;top:202.0px;" width="13.0" height="13.0" viewBox="0 0 13.0 13.0"><circle cx="6.5" cy="6.5" r="6.2" fill="#3f85f3"/><rect x="4.2" y="2.2" width="5.1" height="1.6" rx="0.6" fill="#e8f0fd"/><rect x="5.1" y="3.6" width="3.6" height="3.7" fill="#e8f0fd"/><path d="M3.1 9L4.6 7.2H8.9L10.3 9Z" fill="#e8f0fd"/><path d="M6.3 9h1.1l-0.55 3.4z" fill="#e8f0fd"/></svg>
<div class="r" style="left:660px;top:187px;width:401.5px;height:713px;background:#dfe5f1;border:1px solid #abc4f5;border-top:none;box-shadow:0 1px 6px 1.5px rgba(110,160,245,0.5);border-radius:0 0 4px 4px;"></div>
<div class="r" style="left:661px;top:173px;width:399.5px;height:14px;background:linear-gradient(#5592f3,#4a86ee);"></div>
<div class="t" style="left:830.75px;width:60px;text-align:center;top:172.55px;font-size:11.4px;line-height:15px;color:#ffffff;font-weight:normal;font-family:'Liberation Sans',sans-serif;">Pen</div>
<svg class="r" style="left:663px;top:173px;" width="14" height="14" viewBox="0 0 14 14"><circle cx="7" cy="7" r="6.6" fill="#5a5a6c"/><path d="M4.6 4.6l4.8 4.8M9.4 4.6l-4.8 4.8" stroke="#fff" stroke-width="1.9" stroke-linecap="round"/></svg>
<div class="r" style="left:663px;top:201px;width:395.0px;height:38px;background:#4884b3;"></div>
<div class="r" style="left:668px;top:206px;width:385.0px;height:28px;border:1px solid #a9acb2;"></div>
<div class="t" style="left:671.40px;top:211.68px;font-size:14.2px;line-height:18px;color:#ffffff;font-weight:normal;font-family:'Liberation Mono',monospace;-webkit-text-stroke:0.35px #fff;letter-spacing:-0.1px;">Font styles</div>
<svg class="r" style="left:1044.0px;top:202.0px;" width="13.0" height="13.0" viewBox="0 0 13.0 13.0"><circle cx="6.5" cy="6.5" r="6.2" fill="#3f85f3"/><rect x="4.2" y="2.2" width="5.1" height="1.6" rx="0.6" fill="#e8f0fd"/><rect x="5.1" y="3.6" width="3.6" height="3.7" fill="#e8f0fd"/><path d="M3.1 9L4.6 7.2H8.9L10.3 9Z" fill="#e8f0fd"/><path d="M6.3 9h1.1l-0.55 3.4z" fill="#e8f0fd"/></svg>
<div class="r" style="left:260px;top:248px;width:184px;height:194px;background:#d4d9e4;border:2px dotted #ffffff;"></div>
<div class="r" style="left:312.0px;top:241.5px;width:80.0px;height:14.0px;background:#5b5a6d;border-radius:7px;"></div>
<div class="t" style="left:202.00px;width:300px;text-align:center;top:241.45px;font-size:11.4px;line-height:15px;color:#ffffff;font-weight:normal;font-family:'Liberation Sans',sans-serif;-webkit-text-stroke:0.3px #fff;">Google Font</div>
<div class="r" style="left:456px;top:248px;width:185px;height:194px;background:#d4d9e4;border:2px dotted #ffffff;"></div>
<div class="r" style="left:508.5px;top:241.5px;width:80.0px;height:14.0px;background:#5b5a6d;border-radius:7px;"></div>
<div class="t" style="left:398.50px;width:300px;text-align:center;top:241.45px;font-size:11.4px;line-height:15px;color:#ffffff;font-weight:normal;font-family:'Liberation Sans',sans-serif;-webkit-text-stroke:0.3px #fff;">Google Font</div>
<div class="r" style="left:260px;top:454px;width:184px;height:149px;background:#d4d9e4;border:2px dotted #ffffff;"></div>
<div class="r" style="left:312.0px;top:447.5px;width:80.0px;height:14.0px;background:#5b5a6d;border-radius:7px;"></div>
<div class="t" style="left:202.00px;width:300px;text-align:center;top:447.45px;font-size:11.4px;line-height:15px;color:#ffffff;font-weight:normal;font-family:'Liberation Sans',sans-serif;-webkit-text-stroke:0.3px #fff;">Google Font</div>
<div class="r" style="left:456px;top:454px;width:185px;height:127px;background:#d4d9e4;border:2px dotted #ffffff;"></div>
<div class="r" style="left:508.5px;top:447.5px;width:80.0px;height:14.0px;background:#5b5a6d;border-radius:7px;"></div>
<div class="t" style="left:398.50px;width:300px;text-align:center;top:447.45px;font-size:11.4px;line-height:15px;color:#ffffff;font-weight:normal;font-family:'Liberation Sans',sans-serif;-webkit-text-stroke:0.3px #fff;">Google Font</div>
<div class="t" style="left:265.00px;top:258.96px;font-size:16px;line-height:21px;color:#2b2b2b;font-weight:normal;font-family:'Liberation Sans',sans-serif;-webkit-text-stroke:0.5px #2b2b2b;letter-spacing:-0.3px;">HEADERS</div>
<div class="t" style="left:265.00px;top:290.15px;font-size:14px;line-height:18px;color:#2b2b2b;font-weight:normal;font-family:'Liberation Sans',sans-serif;"><b>family</b>: Raleway</div>
<div class="t" style="left:265.00px;top:327.55px;font-size:14px;line-height:18px;color:#2b2b2b;font-weight:normal;font-family:'Liberation Sans',sans-serif;"><b>Class</b>:</div>
<div class="t" style="left:317.70px;top:327.55px;font-size:14px;line-height:18px;color:#2b2b2b;font-weight:normal;font-family:'Liberation Sans',sans-serif;"><b>Selectors</b></div>
<div class="t" style="left:265.00px;top:351.15px;font-size:14px;line-height:18px;color:#2b2b2b;font-weight:normal;font-family:'Liberation Sans',sans-serif;">header-</div>
<div class="t" style="left:265.00px;top:372.65px;font-size:14px;line-height:18px;color:#2b2b2b;font-weight:normal;font-family:'Liberation Sans',sans-serif;">font</div>
<div class="t" style="left:317.70px;top:358.55px;font-size:14px;line-height:18px;color:#2b2b2b;font-weight:normal;font-family:'Liberation Sans',sans-serif;">h1,.h1, h2,.h2, h3,.</div>
<div class="t" style="left:317.70px;top:380.75px;font-size:14px;line-height:18px;color:#2b2b2b;font-weight:normal;font-family:'Liberation Sans',sans-serif;">h3, h4,.h4, h5,.h5,</div>
<div class="t" style="left:317.70px;top:401.95px;font-size:14px;line-height:18px;color:#2b2b2b;font-weight:normal;font-family:'Liberation Sans',sans-serif;">h6,.h6,</div>
<div class="t" style="left:460.00px;top:258.96px;font-size:16px;line-height:21px;color:#2b2b2b;font-weight:normal;font-family:'Liberation Sans',sans-serif;-webkit-text-stroke:0.5px #2b2b2b;letter-spacing:-0.3px;">HEADERS</div>
<div class="t" style="left:460.00px;top:290.15px;font-size:14px;line-height:18px;color:#2b2b2b;font-weight:normal;font-family:'Liberation Sans',sans-serif;"><b>family</b>: Raleway</div>
<div class="t" style="left:460.00px;top:327.55px;font-size:14px;line-height:18px;color:#2b2b2b;font-weight:normal;font-family:'Liberation Sans',sans-serif;"><b>Class</b>:</div>
<div class="t" style="left:512.70px;top:327.55px;font-size:14px;line-height:18px;color:#2b2b2b;font-weight:normal;font-family:'Liberation Sans',sans-serif;"><b>Selectors</b></div>
<div class="t" style="left:460.00px;top:351.15px;font-size:14px;line-height:18px;color:#2b2b2b;font-weight:normal;font-family:'Liberation Sans',sans-serif;">header-</div>
<div class="t" style="left:460.00px;top:372.65px;font-size:14px;line-height:18px;color:#2b2b2b;font-weight:normal;font-family:'Liberation Sans',sans-serif;">font</div>
<div class="t" style="left:512.70px;top:358.55px;font-size:14px;line-height:18px;color:#2b2b2b;font-weight:normal;font-family:'Liberation Sans',sans-serif;">h1,.h1, h2,.h2, h3,.</div>
<div class="t" style="left:512.70px;top:380.75px;font-size:14px;line-height:18px;color:#2b2b2b;font-weight:normal;font-family:'Liberation Sans',sans-serif;">h3, h4,.h4, h5,.h5,</div>
<div class="t" style="left:512.70px;top:401.95px;font-size:14px;line-height:18px;color:#2b2b2b;font-weight:normal;font-family:'Liberation Sans',sans-serif;">h6,.h6,</div>
<div class="t" style="left:265.00px;top:464.96px;font-size:16px;line-height:21px;color:#2b2b2b;font-weight:normal;font-family:'Liberation Sans',sans-serif;-webkit-text-stroke:0.5px #2b2b2b;letter-spacing:-0.3px;">TEXT</div>
<div class="t" style="left:265.00px;top:496.15px;font-size:14px;line-height:18px;color:#2b2b2b;font-weight:normal;font-family:'Liberation Sans',sans-serif;"><b>family</b>: Open Sans</div>
<div class="t" style="left:237.00px;width:200px;text-align:right;top:533.15px;font-size:14px;line-height:18px;color:#2b2b2b;font-weight:normal;font-family:'Liberation Sans',sans-serif;letter-spacing:0.4px;"><b>Class</b>: text-font<b>Selectors</b></div>
<div class="t" style="left:239.50px;width:200px;text-align:right;top:564.15px;font-size:14px;line-height:18px;color:#2b2b2b;font-weight:normal;font-family:'Liberation Sans',sans-serif;">html,body,</div>
<div class="t" style="left:460.00px;top:464.96px;font-size:16px;line-height:21px;color:#2b2b2b;font-weight:normal;font-family:'Liberation Sans',sans-serif;-webkit-text-stroke:0.5px #2b2b2b;letter-spacing:-0.3px;">BLOG CATEGORIES</div>
<div class="t" style="left:460.00px;top:496.15px;font-size:14px;line-height:18px;color:#2b2b2b;font-weight:normal;font-family:'Liberation Sans',sans-serif;"><b>family</b>: Open Sans</div>
<div class="t" style="left:436.00px;width:200px;text-align:right;top:533.15px;font-size:14px;line-height:18px;color:#2b2b2b;font-weight:normal;font-family:'Liberation Sans',sans-serif;"><b>Class</b>:<b>Selectors</b></div>
<div class="r" style="left:671px;top:248px;width:184px;height:89px;background:#d4d9e4;border:2px dotted #ffffff;"></div>
<div class="r" style="left:687.6px;top:241.5px;width:150.79999999999995px;height:14.0px;background:#5b5a6d;border-radius:7px;"></div>
<div class="t" style="left:613.00px;width:300px;text-align:center;top:241.45px;font-size:11.4px;line-height:15px;color:#ffffff;font-weight:normal;font-family:'Liberation Sans',sans-serif;-webkit-text-stroke:0.3px #fff;">BLOG TITLES · Font Style</div>
<div class="t" style="left:633.00px;width:260px;text-align:center;top:258.41px;font-size:17px;line-height:22px;color:#2b2b2b;font-weight:normal;font-family:'Liberation Sans',sans-serif;-webkit-text-stroke:0.3px #2b2b2b;">.list-of-posts .post-title</div>
<div class="t" style="left:650.50px;width:200px;text-align:right;top:289.11px;font-size:14.4px;line-height:19px;color:#2b2b2b;font-weight:normal;font-family:'Liberation Sans',sans-serif;"><b>Selectors</b></div>
<div class="r" style="left:868px;top:248px;width:183px;height:89px;background:#d4d9e4;border:2px dotted #ffffff;"></div>
<div class="r" style="left:907.4px;top:241.5px;width:104.20000000000005px;height:14.0px;background:#5b5a6d;border-radius:7px;"></div>
<div class="t" style="left:809.50px;width:300px;text-align:center;top:241.45px;font-size:11.4px;line-height:15px;color:#ffffff;font-weight:normal;font-family:'Liberation Sans',sans-serif;-webkit-text-stroke:0.3px #fff;">Bold · Font Style</div>
<div class="t" style="left:829.50px;width:260px;text-align:center;top:258.41px;font-size:17px;line-height:22px;color:#2b2b2b;font-weight:normal;font-family:'Liberation Sans',sans-serif;-webkit-text-stroke:0.3px #2b2b2b;">.bold</div>
<div class="t" style="left:846.50px;width:200px;text-align:right;top:289.11px;font-size:14.4px;line-height:19px;color:#2b2b2b;font-weight:normal;font-family:'Liberation Sans',sans-serif;"><b>Selectors</b></div>
<div class="r" style="left:671px;top:351px;width:184px;height:88px;background:#d4d9e4;border:2px dotted #ffffff;"></div>
<div class="r" style="left:710.9px;top:344.5px;width:104.20000000000005px;height:14.0px;background:#5b5a6d;border-radius:7px;"></div>
<div class="t" style="left:613.00px;width:300px;text-align:center;top:344.45px;font-size:11.4px;line-height:15px;color:#ffffff;font-weight:normal;font-family:'Liberation Sans',sans-serif;-webkit-text-stroke:0.3px #fff;">Bold · Font Style</div>
<div class="t" style="left:633.00px;width:260px;text-align:center;top:361.41px;font-size:17px;line-height:22px;color:#2b2b2b;font-weight:normal;font-family:'Liberation Sans',sans-serif;-webkit-text-stroke:0.3px #2b2b2b;">.thin</div>
<div class="t" style="left:650.50px;width:200px;text-align:right;top:392.11px;font-size:14.4px;line-height:19px;color:#2b2b2b;font-weight:normal;font-family:'Liberation Sans',sans-serif;"><b>Selectors</b></div>
<div class="r" style="left:868px;top:351px;width:183px;height:111px;background:#d4d9e4;border:2px dotted #ffffff;"></div>
<div class="r" style="left:892.8px;top:344.5px;width:133.4000000000001px;height:14.0px;background:#5b5a6d;border-radius:7px;"></div>
<div class="t" style="left:809.50px;width:300px;text-align:center;top:344.45px;font-size:11.4px;line-height:15px;color:#ffffff;font-weight:normal;font-family:'Liberation Sans',sans-serif;-webkit-text-stroke:0.3px #fff;">H1 header · Font Style</div>
<div class="t" style="left:829.50px;width:260px;text-align:center;top:361.41px;font-size:17px;line-height:22px;color:#2b2b2b;font-weight:normal;font-family:'Liberation Sans',sans-serif;-webkit-text-stroke:0.3px #2b2b2b;">.myclass</div>
<div class="t" style="left:846.50px;width:200px;text-align:right;top:392.11px;font-size:14.4px;line-height:19px;color:#2b2b2b;font-weight:normal;font-family:'Liberation Sans',sans-serif;"><b>Selectors</b></div>
<div class="t" style="left:981.00px;top:423.15px;font-size:14px;line-height:18px;color:#2b2b2b;font-weight:normal;font-family:'Liberation Sans',sans-serif;">h1,.h1,</div>
<div class="r" style="left:671px;top:475px;width:184px;height:133px;background:#d4d9e4;border:2px dotted #ffffff;"></div>
<div class="r" style="left:683.4px;top:468.5px;width:159.20000000000005px;height:14.0px;background:#5b5a6d;border-radius:7px;"></div>
<div class="t" style="left:613.00px;width:300px;text-align:center;top:468.45px;font-size:11.4px;line-height:15px;color:#ffffff;font-weight:normal;font-family:'Liberation Sans',sans-serif;-webkit-text-stroke:0.3px #fff;">H2-h6 headers · Font Style</div>
<div class="t" style="left:633.00px;width:260px;text-align:center;top:485.41px;font-size:17px;line-height:22px;color:#2b2b2b;font-weight:normal;font-family:'Liberation Sans',sans-serif;-webkit-text-stroke:0.3px #2b2b2b;">.myclass</div>
<div class="t" style="left:675.00px;top:515.11px;font-size:14.4px;line-height:19px;color:#2b2b2b;font-weight:normal;font-family:'Liberation Sans',sans-serif;"><b>Selectors</b></div>
<div class="t" style="left:675.00px;top:546.15px;font-size:14px;line-height:18px;color:#2b2b2b;font-weight:normal;font-family:'Liberation Sans',sans-serif;">h2,.h2, h3,.h3, h4,.h4, h5,.</div>
<div class="t" style="left:675.00px;top:568.45px;font-size:14px;line-height:18px;color:#2b2b2b;font-weight:normal;font-family:'Liberation Sans',sans-serif;">h5, h6,.h6,</div>
<div class="r" style="left:868px;top:475px;width:183px;height:88px;background:#d4d9e4;border:2px dotted #ffffff;"></div>
<div class="r" style="left:925.0px;top:468.5px;width:69.0px;height:14.0px;background:#5b5a6d;border-radius:7px;"></div>
<div class="t" style="left:809.50px;width:300px;text-align:center;top:468.45px;font-size:11.4px;line-height:15px;color:#ffffff;font-weight:normal;font-family:'Liberation Sans',sans-serif;-webkit-text-stroke:0.3px #fff;">Font Style</div>
<div class="t" style="left:829.50px;width:260px;text-align:center;top:485.41px;font-size:17px;line-height:22px;color:#2b2b2b;font-weight:normal;font-family:'Liberation Sans',sans-serif;-webkit-text-stroke:0.3px #2b2b2b;">.huge-text</div>
<div class="t" style="left:846.50px;width:200px;text-align:right;top:516.11px;font-size:14.4px;line-height:19px;color:#2b2b2b;font-weight:normal;font-family:'Liberation Sans',sans-serif;"><b>Selectors</b></div>
<div class="r" style="left:671px;top:621px;width:184px;height:88px;background:#d4d9e4;border:2px dotted #ffffff;"></div>
<div class="r" style="left:728.5px;top:614.5px;width:69.0px;height:14.0px;background:#5b5a6d;border-radius:7px;"></div>
<div class="t" style="left:613.00px;width:300px;text-align:center;top:614.45px;font-size:11.4px;line-height:15px;color:#ffffff;font-weight:normal;font-family:'Liberation Sans',sans-serif;-webkit-text-stroke:0.3px #fff;">Font Style</div>
<div class="t" style="left:633.00px;width:260px;text-align:center;top:631.41px;font-size:17px;line-height:22px;color:#2b2b2b;font-weight:normal;font-family:'Liberation Sans',sans-serif;-webkit-text-stroke:0.3px #2b2b2b;">.small-header</div>
<div class="t" style="left:650.50px;width:200px;text-align:right;top:662.11px;font-size:14.4px;line-height:19px;color:#2b2b2b;font-weight:normal;font-family:'Liberation Sans',sans-serif;"><b>Selectors</b></div>
<div class="r" style="left:868px;top:621px;width:183px;height:88px;background:#d4d9e4;border:2px dotted #ffffff;"></div>
<div class="r" style="left:925.0px;top:614.5px;width:69.0px;height:14.0px;background:#5b5a6d;border-radius:7px;"></div>
<div class="t" style="left:809.50px;width:300px;text-align:center;top:614.45px;font-size:11.4px;line-height:15px;color:#ffffff;font-weight:normal;font-family:'Liberation Sans',sans-serif;-webkit-text-stroke:0.3px #fff;">Font Style</div>
<div class="t" style="left:829.50px;width:260px;text-align:center;top:631.41px;font-size:17px;line-height:22px;color:#2b2b2b;font-weight:normal;font-family:'Liberation Sans',sans-serif;-webkit-text-stroke:0.3px #2b2b2b;">.big-header</div>
<div class="t" style="left:846.50px;width:200px;text-align:right;top:662.11px;font-size:14.4px;line-height:19px;color:#2b2b2b;font-weight:normal;font-family:'Liberation Sans',sans-serif;"><b>Selectors</b></div>
<div class="r" style="left:671px;top:723px;width:184px;height:88px;background:#d4d9e4;border:2px dotted #ffffff;"></div>
<div class="r" style="left:728.5px;top:716.5px;width:69.0px;height:14.0px;background:#5b5a6d;border-radius:7px;"></div>
<div class="t" style="left:613.00px;width:300px;text-align:center;top:716.45px;font-size:11.4px;line-height:15px;color:#ffffff;font-weight:normal;font-family:'Liberation Sans',sans-serif;-webkit-text-stroke:0.3px #fff;">Font Style</div>
<div class="t" style="left:633.00px;width:260px;text-align:center;top:733.41px;font-size:17px;line-height:22px;color:#2b2b2b;font-weight:normal;font-family:'Liberation Sans',sans-serif;-webkit-text-stroke:0.3px #2b2b2b;">.huge-header</div>
<div class="t" style="left:650.50px;width:200px;text-align:right;top:764.11px;font-size:14.4px;line-height:19px;color:#2b2b2b;font-weight:normal;font-family:'Liberation Sans',sans-serif;"><b>Selectors</b></div>
<div class="r" style="left:868px;top:723px;width:183px;height:88px;background:#d4d9e4;border:2px dotted #ffffff;"></div>
<div class="r" style="left:925.0px;top:716.5px;width:69.0px;height:14.0px;background:#5b5a6d;border-radius:7px;"></div>
<div class="t" style="left:809.50px;width:300px;text-align:center;top:716.45px;font-size:11.4px;line-height:15px;color:#ffffff;font-weight:normal;font-family:'Liberation Sans',sans-serif;-webkit-text-stroke:0.3px #fff;">Font Style</div>
<div class="t" style="left:829.50px;width:260px;text-align:center;top:733.41px;font-size:17px;line-height:22px;color:#2b2b2b;font-weight:normal;font-family:'Liberation Sans',sans-serif;-webkit-text-stroke:0.3px #2b2b2b;">.big-text</div>
<div class="t" style="left:846.50px;width:200px;text-align:right;top:764.11px;font-size:14.4px;line-height:19px;color:#2b2b2b;font-weight:normal;font-family:'Liberation Sans',sans-serif;"><b>Selectors</b></div>
<div class="r" style="left:671px;top:825px;width:184px;height:88px;background:#d4d9e4;border:2px dotted #ffffff;"></div>
<div class="r" style="left:728.5px;top:818.5px;width:69.0px;height:14.0px;background:#5b5a6d;border-radius:7px;"></div>
<div class="t" style="left:613.00px;width:300px;text-align:center;top:818.45px;font-size:11.4px;line-height:15px;color:#ffffff;font-weight:normal;font-family:'Liberation Sans',sans-serif;-webkit-text-stroke:0.3px #fff;">Font Style</div>
<div class="t" style="left:633.00px;width:260px;text-align:center;top:835.41px;font-size:17px;line-height:22px;color:#2b2b2b;font-weight:normal;font-family:'Liberation Sans',sans-serif;-webkit-text-stroke:0.3px #2b2b2b;">.small-text</div>
<div class="t" style="left:650.50px;width:200px;text-align:right;top:866.11px;font-size:14.4px;line-height:19px;color:#2b2b2b;font-weight:normal;font-family:'Liberation Sans',sans-serif;"><b>Selectors</b></div>
<svg class="r" style="left:955px;top:628px;" width="15" height="22" viewBox="0 0 15 22"><path d="M1 1v15l4-4 3 6.5 2.2-1-3-6.3h5.5z" fill="#000" stroke="#fff" stroke-width="1"/></svg>
<div class="r" style="left:1109px;top:68px;width:1px;height:779px;background:#c9c9c9;"></div>
<div class="r" style="left:1110px;top:68px;width:330px;height:779px;background:#ececec;"></div>
<div class="r" style="left:1110px;top:68px;width:330px;height:29px;background:#ebebeb;"></div>
<div class="r" style="left:1368px;top:68px;width:51px;height:28px;background:linear-gradient(#6aa3f8,#2a70ea);"></div>
<svg class="r" style="left:1127px;top:72px;" width="20" height="20" viewBox="0 0 20 20"><rect x="2.6" y="2.6" width="13.4" height="14.9" fill="#f6f6f6" stroke="#3a3a3a" stroke-width="1.3"/><path d="M2.6 7.1h13.4M6.3 7.1v10.4" stroke="#3a3a3a" stroke-width="1.3"/></svg>
<svg class="r" style="left:1178px;top:72px;" width="20" height="20" viewBox="0 0 20 20"><rect x="2.6" y="2.6" width="13.4" height="14.9" fill="#f6f6f6" stroke="#3a3a3a" stroke-width="1.3"/><rect x="3" y="7.5" width="3.3" height="9.6" fill="#9a9a9a"/><path d="M2.6 7.1h13.4M6.3 7.1v10.4" stroke="#3a3a3a" stroke-width="1.3"/></svg>
<svg class="r" style="left:1230px;top:72px;" width="20" height="20" viewBox="0 0 20 20"><rect x="2.6" y="2.6" width="13.4" height="14.9" fill="#f6f6f6" stroke="#3a3a3a" stroke-width="1.3"/><rect x="3" y="3" width="12.6" height="4" fill="#a8a8a8"/><path d="M2.6 7.1h13.4M6.3 7.1v10.4" stroke="#3a3a3a" stroke-width="1.3"/></svg>
<svg class="r" style="left:1281px;top:72px;" width="20" height="20" viewBox="0 0 20 20"><path d="M11 2.5h6.5v6.5L9 17.5 2.5 11z" fill="#b5b5b5" stroke="#3a3a3a" stroke-width="1.3" stroke-linejoin="round"/><circle cx="14.5" cy="5.5" r="1" fill="#3a3a3a"/><circle cx="9" cy="11" r="2" fill="none" stroke="#3a3a3a" stroke-width="1"/></svg>
<svg class="r" style="left:1332px;top:72px;" width="20" height="20" viewBox="0 0 20 20"><path d="M10 2.5a7.5 7.5 0 1 0 0 15h7.5V10A7.5 7.5 0 0 0 10 2.5z" fill="none" stroke="#3a3a3a" stroke-width="1.3"/><circle cx="10" cy="10" r="5" fill="#8a8a8a" stroke="#3a3a3a" stroke-width="0.8"/></svg>
<svg class="r" style="left:1384px;top:72px;" width="20" height="20" viewBox="0 0 20 20"><path d="M2.9 10L6.6 3.4H14.2L17.9 10L14.2 16.6H6.6Z" fill="none" stroke="#fff" stroke-width="1.2" stroke-linejoin="round"/><circle cx="10.4" cy="10" r="2.5" fill="none" stroke="#fff" stroke-width="1.2"/></svg>
<svg class="r" style="left:1420px;top:72px;" width="20" height="20" viewBox="0 0 20 20"><rect x="3.3" y="6.3" width="10.3" height="8.6" fill="none" stroke="#888" stroke-width="1.1"/><rect x="11.4" y="3.4" width="4.6" height="8.6" fill="#d4d4d4" stroke="#888" stroke-width="1.1"/></svg>
<div class="r" style="left:1110px;top:96px;width:330px;height:125px;background:#ffffff;"></div>
<div class="r" style="left:1110px;top:140px;width:330px;height:1px;background:#e6e6e6;"></div>
<div class="t" style="left:1130.00px;top:110.74px;font-size:12.3px;line-height:16px;color:#2a2a2a;font-weight:bold;font-family:'Liberation Sans',sans-serif;">Stacks</div>
<svg class="r" style="left:1129px;top:159px;" width="22" height="22" viewBox="0 0 22 22"><path d="M11 2l8.5 4v10L11 20 2.5 16V6z" fill="#fff" stroke="#1e1e1e" stroke-width="1.4" stroke-linejoin="round"/><path d="M2.5 6L11 10v10L2.5 16z" fill="#1e1e1e"/><path d="M11 10l8.5-4" stroke="#1e1e1e" stroke-width="1.4"/></svg>
<div class="t" style="left:1159.00px;top:157.52px;font-size:18.7px;line-height:24px;color:#262626;font-weight:normal;font-family:'Liberation Sans',sans-serif;">2 Pen Stacks</div>
<svg class="r" style="left:1116px;top:204px;" width="10" height="9" viewBox="0 0 10 9"><path d="M0.5 0.5h9l-4.5 8z" fill="#7a7a7a"/></svg>
<div class="t" style="left:1130.00px;top:201.74px;font-size:12.3px;line-height:16px;color:#808080;font-weight:normal;font-family:'Liberation Sans',sans-serif;">Pen Notes</div>
<div class="r" style="left:1224px;top:230px;width:12px;height:12px;background:#fff;border:0.5px solid #b5b5b5;border-radius:3px;box-shadow:0 0.5px 0.5px rgba(0,0,0,0.1);"></div>
<div class="t" style="left:1241.00px;top:228.62px;font-size:11.2px;line-height:15px;color:#262626;font-weight:normal;font-family:'Liberation Sans',sans-serif;">Collapse Pen?</div>
<svg class="r" style="left:1224px;top:258px;" width="12" height="12" viewBox="0 0 12 12"><rect x="0" y="0" width="12" height="12" rx="3" fill="#3d87f5"/><path d="M3 6.3l2.2 2.4 4-5" fill="none" stroke="#fff" stroke-width="1.4"/></svg>
<div class="t" style="left:1241.00px;top:256.62px;font-size:11.2px;line-height:15px;color:#262626;font-weight:normal;font-family:'Liberation Sans',sans-serif;">Slim Note?</div>
<div class="t" style="left:1095.00px;width:120px;text-align:right;top:286.52px;font-size:11.5px;line-height:15px;color:#262626;font-weight:normal;font-family:'Liberation Sans',sans-serif;">Note Color:</div>
<div class="r" style="left:1224px;top:286px;width:195px;height:17px;background:#fff;border-radius:4px;box-shadow:0 0 0 0.5px rgba(0,0,0,0.2),0 0.5px 1px rgba(0,0,0,0.2);"></div>
<div class="r" style="left:1405px;top:286px;width:14px;height:17px;background:linear-gradient(#559af7,#2d73ea);border-radius:0 4px 4px 0;"></div>
<svg class="r" style="left:1405px;top:286px;" width="14" height="17" viewBox="0 0 14 17"><path d="M4.5 7l2.5-2.5 2.5 2.5M4.5 10l2.5 2.5 2.5-2.5" fill="none" stroke="#fff" stroke-width="1.2"/></svg>
<div class="t" style="left:1232.00px;top:286.52px;font-size:11.5px;line-height:15px;color:#262626;font-weight:normal;font-family:'Liberation Sans',sans-serif;">Custom</div>
<div class="t" style="left:1095.00px;width:120px;text-align:right;top:325.52px;font-size:11.5px;line-height:15px;color:#262626;font-weight:normal;font-family:'Liberation Sans',sans-serif;">Colors:</div>
<div class="r" style="left:1224px;top:321px;width:57px;height:23px;background:#f2f2f2;border:1px solid #c3c3c3;"></div>
<div class="r" style="left:1229px;top:326px;width:47px;height:13px;background:#4f97c6;border:1px solid #6b6b6b;"></div>
<div class="r" style="left:1332px;top:321px;width:57px;height:23px;background:#f2f2f2;border:1px solid #c3c3c3;"></div>
<div class="r" style="left:1337px;top:326px;width:47px;height:13px;background:#ffffff;border:1px solid #6b6b6b;"></div>
<div class="t" style="left:1202.50px;width:100px;text-align:center;top:346.84px;font-size:9.7px;line-height:13px;color:#858585;font-weight:normal;font-family:'Liberation Sans',sans-serif;">Background</div>
<div class="t" style="left:1310.50px;width:100px;text-align:center;top:346.84px;font-size:9.7px;line-height:13px;color:#858585;font-weight:normal;font-family:'Liberation Sans',sans-serif;">Text</div>
<div class="r" style="left:1110px;top:376px;width:330px;height:24px;background:#ffffff;"></div>
<svg class="r" style="left:1116px;top:384px;" width="10" height="9" viewBox="0 0 10 9"><path d="M0.5 0.5h9l-4.5 8z" fill="#7a7a7a"/></svg>
<svg class="r" style="left:1130px;top:381px;" width="15" height="14" viewBox="0 0 15 14"><path d="M7.5 1L14.5 13.5h-14z" fill="#f6c944" stroke="#e8b52e" stroke-width="0.5" stroke-linejoin="round"/><path d="M7.5 5v4.5" stroke="#222" stroke-width="1.4"/><circle cx="7.5" cy="11.3" r="0.8" fill="#222"/></svg>
<div class="t" style="left:1150.00px;top:380.74px;font-size:12.3px;line-height:16px;color:#808080;font-weight:normal;font-family:'Liberation Sans',sans-serif;">Warning</div>
<svg class="r" style="left:1201px;top:381px;" width="15" height="14" viewBox="0 0 15 14"><path d="M7.5 1L14.5 13.5h-14z" fill="#f6c944" stroke="#e8b52e" stroke-width="0.5" stroke-linejoin="round"/><path d="M7.5 5v4.5" stroke="#222" stroke-width="1.4"/><circle cx="7.5" cy="11.3" r="0.8" fill="#222"/></svg>
<div class="r" style="left:1224px;top:409px;width:12px;height:12px;background:#fff;border:0.5px solid #b5b5b5;border-radius:3px;box-shadow:0 0.5px 0.5px rgba(0,0,0,0.1);"></div>
<div class="t" style="left:1241.00px;top:407.62px;font-size:11.2px;line-height:15px;color:#262626;font-weight:normal;font-family:'Liberation Sans',sans-serif;">Do Not Publish Content?</div>
<div class="r" style="left:0px;top:0px;width:1440px;height:1px;background:#f3f3f3;"></div>
<svg class="r" style="left:0px;top:0px" width="5" height="5" viewBox="0 0 5 5"><g transform="rotate(0 2.5 2.5)"><path d="M0 0H4.2A4.2 4.2 0 0 0 0 4.2Z" fill="#000"/><path d="M4.2 0A4.2 4.2 0 0 0 0 4.2" fill="none" stroke="#fff" stroke-width="1"/></g></svg>
<svg class="r" style="left:1435px;top:0px" width="5" height="5" viewBox="0 0 5 5"><g transform="rotate(90 2.5 2.5)"><path d="M0 0H4.2A4.2 4.2 0 0 0 0 4.2Z" fill="#000"/><path d="M4.2 0A4.2 4.2 0 0 0 0 4.2" fill="none" stroke="#fff" stroke-width="1"/></g></svg>
<svg class="r" style="left:1435px;top:842px" width="5" height="5" viewBox="0 0 5 5"><g transform="rotate(180 2.5 2.5)"><path d="M0 0H4.2A4.2 4.2 0 0 0 0 4.2Z" fill="#000"/><path d="M4.2 0A4.2 4.2 0 0 0 0 4.2" fill="none" stroke="#fff" stroke-width="1"/></g></svg>
<svg class="r" style="left:0px;top:842px" width="5" height="5" viewBox="0 0 5 5"><g transform="rotate(270 2.5 2.5)"><path d="M0 0H4.2A4.2 4.2 0 0 0 0 4.2Z" fill="#000"/><path d="M4.2 0A4.2 4.2 0 0 0 0 4.2" fill="none" stroke="#fff" stroke-width="1"/></g></svg>
</body></html>
